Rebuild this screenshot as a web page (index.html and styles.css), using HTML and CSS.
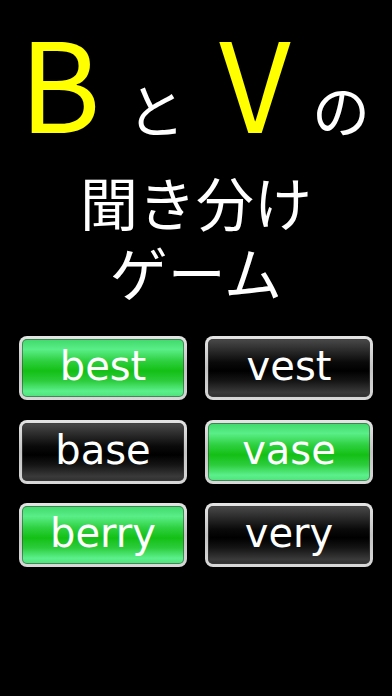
FILE: index.html
```html
<!DOCTYPE html>
<html lang="ja">
<head>
<meta charset="utf-8">
<title>BとVの聞き分けゲーム</title>
<link rel="stylesheet" href="styles.css">
</head>
<body>
<main class="screen">
  <h1 class="title">
    <span class="row1">
      <span class="big">B</span>
      <span class="kana">と</span>
      <span class="big">V</span>
      <span class="kana">の</span>
    </span>
    <span class="line first">聞き分け</span>
    <span class="line">ゲーム</span>
  </h1>
  <div class="grid">
    <button class="btn green"><span class="face">best</span></button>
    <button class="btn black"><span class="face">vest</span></button>
    <button class="btn black"><span class="face">base</span></button>
    <button class="btn green"><span class="face">vase</span></button>
    <button class="btn green"><span class="face">berry</span></button>
    <button class="btn black"><span class="face">very</span></button>
  </div>
</main>
</body>
</html>
```
FILE: styles.css
```css
html, body {
  margin: 0;
  padding: 0;
  background: #000;
}
.screen {
  width: 392px;
  height: 696px;
  background: #000;
  font-family: "Noto Sans CJK JP", "Noto Sans", sans-serif;
  color: #fff;
  overflow: hidden;
}
.title {
  margin: 0;
  padding-top: 4px;
  font-weight: normal;
  display: flex;
  flex-direction: column;
  align-items: center;
}
.row1 {
  display: grid;
  grid-template-columns: 96px 96px 102px 70px;
  align-items: baseline;
  width: 364px;
  padding-left: 12px;
  align-self: flex-start;
}
.row1 > span {
  text-align: center;
}
.big {
  color: #ffff00;
  font-size: 124px;
  line-height: 150px;
}
.kana {
  font-size: 58px;
  line-height: 1;
}
.line {
  font-size: 58px;
  line-height: 70px;
}
.line.first {
  margin-top: 12px;
}
.grid {
  margin-top: 30px;
  padding: 0 19px;
  display: grid;
  grid-template-columns: 168px 168px;
  grid-auto-rows: 64px;
  column-gap: 18px;
  row-gap: 19.5px;
}
.btn {
  margin: 0;
  padding: 3px;
  border: 0;
  border-radius: 8px;
  background: linear-gradient(#e4e4e4, #c4c4c4 50%, #d8d8d8);
  display: flex;
  font: inherit;
}
.face {
  flex: 1;
  border-radius: 5px;
  box-shadow: inset 0 0 0 1px rgba(60, 60, 60, 0.55);
  display: flex;
  align-items: center;
  justify-content: center;
  font-family: "DejaVu Sans", Verdana, sans-serif;
  font-size: 40px;
  color: #fff;
  padding-bottom: 4px;
  box-sizing: border-box;
}
.green .face {
  background: linear-gradient(#3fd86a 0%, #5aee88 18%, #2ed040 38%, #14c014 55%, #2ccc3c 72%, #5cf08c 90%, #4ee07a 100%);
}
.black .face {
  background: linear-gradient(#4a4a4a 0%, #2a2a2a 20%, #0a0a0a 40%, #000 55%, #141414 72%, #3a3a3a 92%, #303030 100%);
}
```
